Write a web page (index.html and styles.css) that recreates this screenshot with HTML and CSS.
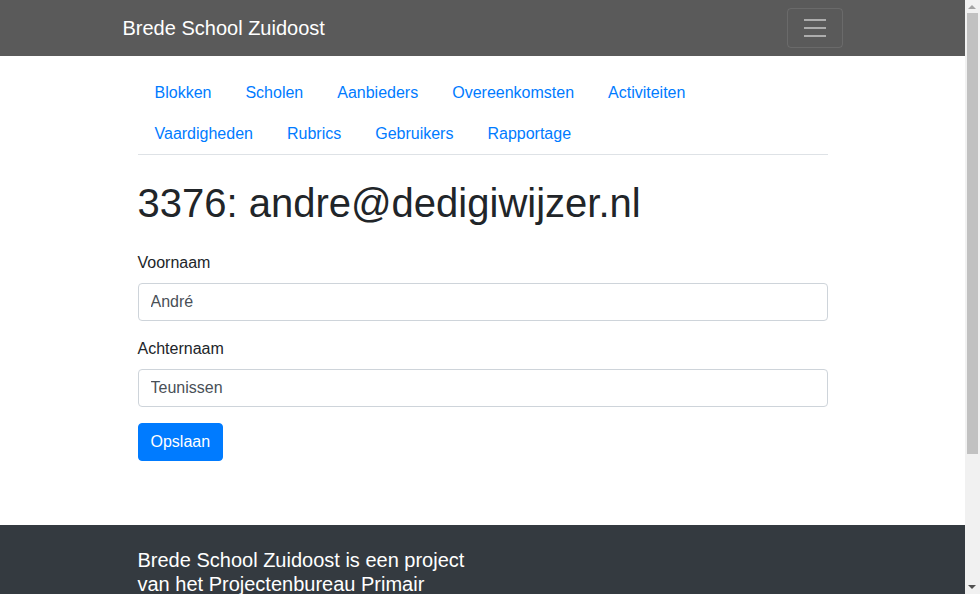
FILE: index.html
```html
<!DOCTYPE html>
<html lang="nl">
<head>
<meta charset="utf-8">
<title>Brede School Zuidoost</title>
<link rel="stylesheet" href="styles.css">
</head>
<body>
<header class="navbar">
  <div class="navbar-inner">
    <a class="brand" href="#">Brede School Zuidoost</a>
    <button class="toggler" type="button" aria-label="Menu">
      <svg width="30" height="30" viewBox="0 0 30 30"><path d="M4 7h22M4 15h22M4 23h22" stroke="rgba(255,255,255,0.5)" stroke-width="2" stroke-linecap="butt" fill="none"/></svg>
    </button>
  </div>
</header>
<main class="container">
  <ul class="nav">
    <li><a href="#">Blokken</a></li>
    <li><a href="#">Scholen</a></li>
    <li><a href="#">Aanbieders</a></li>
    <li><a href="#">Overeenkomsten</a></li>
    <li><a href="#">Activiteiten</a></li>
    <li><a href="#">Vaardigheden</a></li>
    <li><a href="#">Rubrics</a></li>
    <li><a href="#">Gebruikers</a></li>
    <li><a href="#">Rapportage</a></li>
  </ul>
  <h1 class="title">3376: andre@dedigiwijzer.nl</h1>
  <form class="form">
    <div class="form-group">
      <label for="voornaam">Voornaam</label>
      <input id="voornaam" class="form-control" type="text" value="André">
    </div>
    <div class="form-group">
      <label for="achternaam">Achternaam</label>
      <input id="achternaam" class="form-control" type="text" value="Teunissen">
    </div>
    <button class="btn" type="button">Opslaan</button>
  </form>
</main>
<footer class="footer">
  <div class="container">
    <p class="footer-text">Brede School Zuidoost is een project<br>van het Projectenbureau Primair</p>
  </div>
</footer>
<div class="scrollbar" aria-hidden="true">
  <span class="sb-arrow sb-up"></span>
  <span class="sb-thumb"></span>
  <span class="sb-arrow sb-down"></span>
</div>
</body>
</html>
```

FILE: styles.css
```css
* { box-sizing: border-box; }
html, body { margin: 0; padding: 0; }
body {
  font-family: "Liberation Sans", Arial, sans-serif;
  font-size: 16px;
  line-height: 24px;
  color: #212529;
  background: #fff;
  margin-right: 15px;
}
a { text-decoration: none; }

.navbar {
  background: #5a5a5a;
  height: 56px;
  padding: 8px 0;
}
.navbar-inner {
  max-width: 720px;
  margin: 0 auto;
  display: flex;
  align-items: center;
  justify-content: space-between;
  height: 40px;
}
.brand {
  color: #fff;
  font-size: 20px;
  line-height: 30px;
  padding: 5px 0;
}
.toggler {
  width: 56px;
  height: 40px;
  padding: 0;
  background: transparent;
  border: 1px solid rgba(255,255,255,0.1);
  border-radius: 4px;
  display: flex;
  align-items: center;
  justify-content: center;
}
.toggler svg { display: block; }

.container {
  max-width: 720px;
  margin: 0 auto;
  padding: 0 15px;
}

.nav {
  list-style: none;
  margin: 17px 0 0;
  padding: 0;
  display: flex;
  flex-wrap: wrap;
  border-bottom: 1px solid #dee2e6;
}
.nav a {
  display: block;
  padding: 8px 17px;
  color: #007bff;
  line-height: 24.5px;
}
.title {
  font-size: 40px;
  font-weight: 400;
  line-height: 48px;
  margin: 24px 0 24px;
}
.form-group { margin-bottom: 16px; }
.form-group label {
  display: block;
  margin-bottom: 8px;
}
.form-control {
  display: block;
  width: 100%;
  height: 38px;
  padding: 6px 12px;
  font-family: inherit;
  font-size: 16px;
  line-height: 24px;
  color: #495057;
  background: #fff;
  border: 1px solid #ced4da;
  border-radius: 4px;
}
.btn {
  display: inline-block;
  font-family: inherit;
  font-size: 16px;
  line-height: 24px;
  padding: 6px 12px;
  color: #fff;
  background: #007bff;
  border: 1px solid #007bff;
  border-radius: 4px;
}
.form { margin-bottom: 64px; }

.footer {
  background: #343a40;
  color: #fff;
  padding: 23px 0 0;
  min-height: 236px;
}
.footer-text {
  margin: 0;
  font-size: 20px;
  line-height: 24px;
}

.scrollbar {
  position: fixed;
  top: 0;
  right: 0;
  width: 15px;
  height: 100vh;
  background: #f1f1f1;
}
.sb-thumb {
  position: absolute;
  left: 2px;
  top: 13px;
  width: 11px;
  height: 441px;
  background: #c1c1c1;
}
.sb-arrow {
  position: absolute;
  left: 3px;
  width: 0;
  height: 0;
  border-left: 4px solid transparent;
  border-right: 4px solid transparent;
}
.sb-up {
  top: 5px;
  border-bottom: 4px solid #a3a3a3;
}
.sb-down {
  bottom: 5px;
  border-top: 4px solid #505050;
}
```
